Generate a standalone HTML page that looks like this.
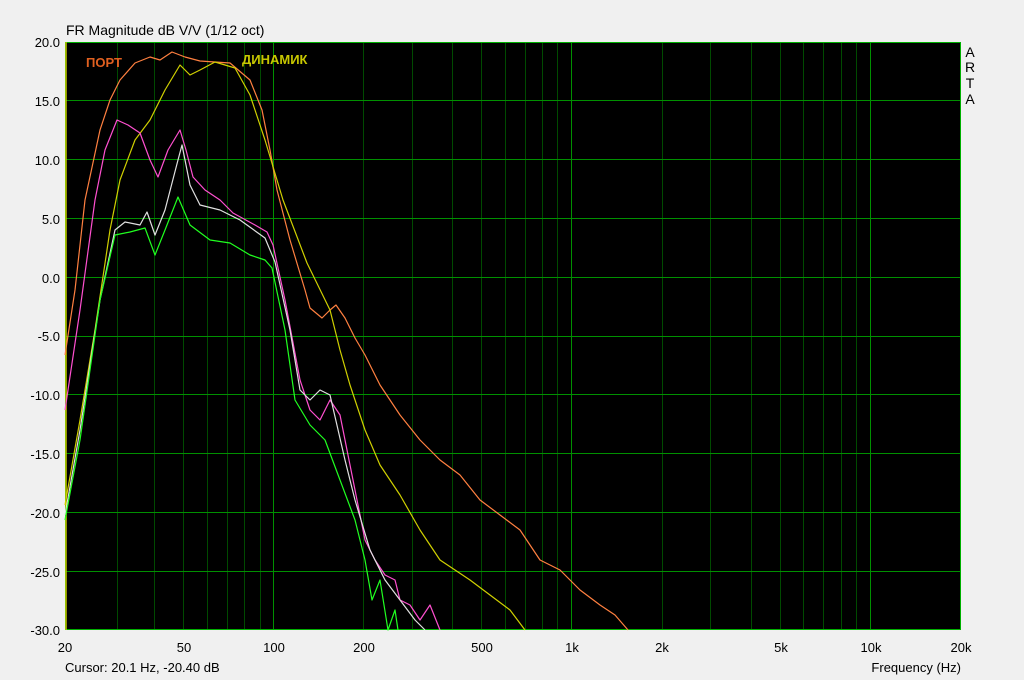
<!DOCTYPE html>
<html><head><meta charset="utf-8"><style>
html,body{margin:0;padding:0;background:#f0f0f0;width:1024px;height:680px;overflow:hidden}
svg{display:block}
text{font-family:"Liberation Sans",sans-serif;font-size:13px;fill:#000}
</style></head><body>
<svg width="1024" height="680" xmlns="http://www.w3.org/2000/svg">
<rect x="65" y="42" width="896" height="588" fill="#000"/>
<g stroke="#004a00" stroke-width="1" shape-rendering="crispEdges">
<line x1="117.5" y1="42" x2="117.5" y2="630"/><line x1="154.5" y1="42" x2="154.5" y2="630"/>
<line x1="183.5" y1="42" x2="183.5" y2="630"/><line x1="207.5" y1="42" x2="207.5" y2="630"/>
<line x1="227.5" y1="42" x2="227.5" y2="630"/><line x1="244.5" y1="42" x2="244.5" y2="630"/>
<line x1="260.5" y1="42" x2="260.5" y2="630"/>
<line x1="363.5" y1="42" x2="363.5" y2="630"/><line x1="412.5" y1="42" x2="412.5" y2="630"/>
<line x1="452.5" y1="42" x2="452.5" y2="630"/><line x1="481.5" y1="42" x2="481.5" y2="630"/>
<line x1="505.5" y1="42" x2="505.5" y2="630"/><line x1="525.5" y1="42" x2="525.5" y2="630"/>
<line x1="542.5" y1="42" x2="542.5" y2="630"/><line x1="557.5" y1="42" x2="557.5" y2="630"/>
<line x1="662.5" y1="42" x2="662.5" y2="630"/><line x1="710.5" y1="42" x2="710.5" y2="630"/>
<line x1="751.5" y1="42" x2="751.5" y2="630"/><line x1="780.5" y1="42" x2="780.5" y2="630"/>
<line x1="803.5" y1="42" x2="803.5" y2="630"/><line x1="823.5" y1="42" x2="823.5" y2="630"/>
<line x1="841.5" y1="42" x2="841.5" y2="630"/><line x1="856.5" y1="42" x2="856.5" y2="630"/>
</g>
<g stroke="#009000" stroke-width="1" shape-rendering="crispEdges">
<line x1="273.5" y1="42" x2="273.5" y2="630"/>
<line x1="571.5" y1="42" x2="571.5" y2="630"/><line x1="870.5" y1="42" x2="870.5" y2="630"/>
<line x1="65" y1="100.5" x2="961" y2="100.5"/><line x1="65" y1="159.5" x2="961" y2="159.5"/>
<line x1="65" y1="218.5" x2="961" y2="218.5"/><line x1="65" y1="277.5" x2="961" y2="277.5"/>
<line x1="65" y1="336.5" x2="961" y2="336.5"/><line x1="65" y1="394.5" x2="961" y2="394.5"/>
<line x1="65" y1="453.5" x2="961" y2="453.5"/><line x1="65" y1="512.5" x2="961" y2="512.5"/>
<line x1="65" y1="571.5" x2="961" y2="571.5"/>
</g>
<rect x="65.5" y="42.5" width="895" height="587" fill="none" stroke="#00b000" shape-rendering="crispEdges"/>
<line x1="66" y1="42" x2="66" y2="630" stroke="#c8c800" stroke-width="1.5"/>
<g fill="none" stroke-width="1.2" stroke-linejoin="round">
<polyline stroke="#ff8040" points="65,355 75,290 85,200 100,130 110,100 120,80 135,63 150,57 160,60 172,52 185,57 200,61 230,63 250,80 262,110 270,150 277,190 290,240 305,290 310,308 322,318 330,310 336,305 345,318 355,338 365,355 380,385 400,415 420,440 440,460 460,475 480,500 500,515 520,530 540,560 560,570 580,590 600,605 615,615 628,630"/>
<polyline stroke="#d0d000" points="65,505 80,420 95,330 110,230 120,180 135,140 150,120 165,90 180,65 190,75 200,70 215,62 235,68 250,95 265,140 283,200 307,263 330,310 340,350 350,385 365,430 380,465 400,495 420,530 440,560 455,570 470,580 490,595 510,610 525,630"/>
<polyline stroke="#ff50d0" points="65,410 80,310 95,200 105,150 117,120 128,125 140,133 150,160 158,177 168,150 180,130 186,150 193,177 205,190 220,200 233,213 255,225 267,232 273,245 285,300 300,380 310,410 320,420 330,400 340,415 345,440 355,490 365,540 375,560 385,575 395,580 400,600 410,605 420,620 430,605 440,630"/>
<polyline stroke="#e0e0e0" points="65,515 80,430 100,300 115,230 125,222 140,225 147,212 155,235 165,210 178,160 182,145 190,185 200,205 220,210 240,220 265,238 275,262 290,330 300,390 310,400 320,390 330,395 345,460 355,500 370,550 385,580 400,600 415,620 425,630"/>
<polyline stroke="#20ff20" points="65,520 80,440 100,300 115,235 130,232 145,228 155,255 165,230 178,197 190,225 210,240 230,243 250,255 265,260 272,268 285,330 295,400 310,425 325,440 340,480 355,520 365,560 372,600 380,580 388,630 395,610 398,630"/>
</g>
<text x="86" y="67" style="fill:#e06020;font-weight:bold;font-size:13px">ПОРТ</text>
<text x="242" y="64" style="fill:#c8c800;font-weight:bold;font-size:13px">ДИНАМИК</text>
<text x="66" y="35" style="font-size:14px">FR Magnitude dB V/V (1/12 oct)</text>
<g text-anchor="end">
<text x="60" y="47">20.0</text><text x="60" y="106">15.0</text><text x="60" y="165">10.0</text>
<text x="60" y="224">5.0</text><text x="60" y="283">0.0</text><text x="60" y="341">-5.0</text>
<text x="60" y="400">-10.0</text><text x="60" y="459">-15.0</text><text x="60" y="518">-20.0</text>
<text x="60" y="577">-25.0</text><text x="60" y="635">-30.0</text>
</g>
<g text-anchor="middle">
<text x="65" y="652">20</text><text x="184" y="652">50</text><text x="274" y="652">100</text>
<text x="364" y="652">200</text><text x="482" y="652">500</text><text x="572" y="652">1k</text>
<text x="662" y="652">2k</text><text x="781" y="652">5k</text><text x="871" y="652">10k</text>
<text x="961" y="652">20k</text>
<text x="970" y="57" style="font-size:14px">A</text><text x="970" y="72" style="font-size:14px">R</text>
<text x="970" y="88" style="font-size:14px">T</text><text x="970" y="104" style="font-size:14px">A</text>
</g>
<text x="65" y="672">Cursor: 20.1 Hz, -20.40 dB</text>
<text x="961" y="672" text-anchor="end">Frequency (Hz)</text>
</svg>
</body></html>
